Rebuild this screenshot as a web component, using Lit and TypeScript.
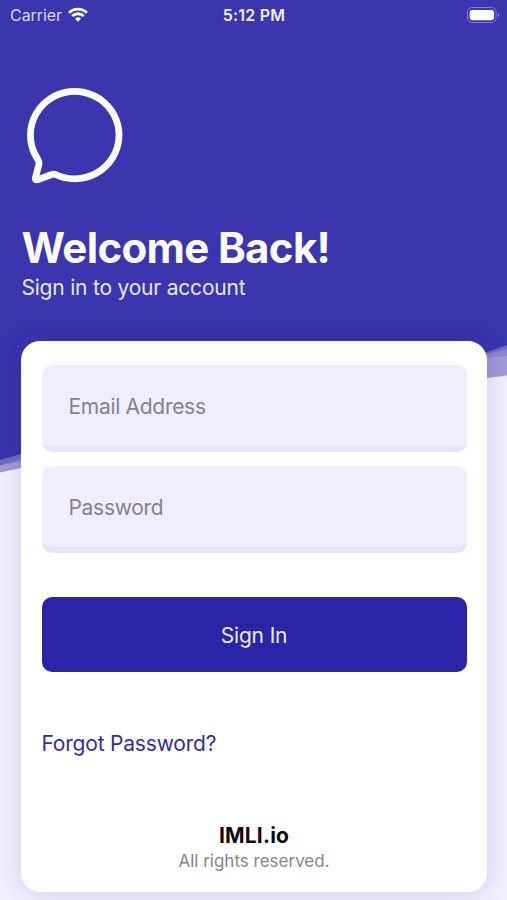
import { LitElement, html, css } from "lit";
import { customElement, property } from "lit/decorators.js";

@customElement("status-bar")
class StatusBar extends LitElement {
  static styles = css`
    :host {
      display: grid;
      grid-template-columns: 1fr auto 1fr;
      align-items: center;
      height: 30px;
      padding: 0 7px 0 10px;
      color: #f0edff;
      font-size: 16px;
      line-height: 30px;
    }
    .carrier { display: flex; align-items: center; gap: 6px; color: #d9d6f8; letter-spacing: -0.05px; }
    .time { padding-right: 2px; font-weight: 600; letter-spacing: 0.2px; }
    .battery { justify-self: end; }
    svg { display: block; margin-top: -1px; }
  `;
  render() {
    return html`
      <div class="carrier">
        <span>Carrier</span>
        <svg width="20" height="15.2" viewBox="0 0 21 16" fill="none" stroke="#fff" stroke-width="3">
          <path d="M1.2 6.1a13.2 13.2 0 0 1 18.6 0" />
          <path d="M4.5 9.6a8.5 8.5 0 0 1 12 0" />
          <path d="M10.5 15.6l-3.1-3.2a4.4 4.4 0 0 1 6.2 0z" fill="#fff" stroke="none" />
        </svg>
      </div>
      <div class="time">5:12 PM</div>
      <svg class="battery" width="34" height="18" viewBox="0 0 34 18">
        <rect x="1.5" y="1.5" width="28.5" height="15" rx="4.5" fill="none" stroke="#8580d0" />
        <rect x="3.7" y="4" width="24.3" height="10.2" rx="2.4" fill="#fff" />
        <path d="M31.8 7v4.2q1.5-.6 1.5-2.1t-1.5-2.1z" fill="#8580d0" />
      </svg>
    `;
  }
}

@customElement("text-field")
class TextField extends LitElement {
  @property() label = "";
  static styles = css`
    :host {
      display: flex;
      align-items: center;
      box-sizing: border-box;
      height: 87px;
      padding: 1px 27px 0;
      border-bottom: 6px solid #e7e4f6;
      border-radius: 10px;
      background: #f0edff;
      color: #85828f;
      font-size: 21px;
      letter-spacing: -0.3px;
    }
  `;
  render() {
    return html`<span>${this.label}</span>`;
  }
}

@customElement("app-root")
class AppRoot extends LitElement {
  static styles = css`
    :host {
      display: block;
      position: relative;
      height: 900px;
      overflow: hidden;
      background: #f2f0ff;
      font-family: Inter, "Liberation Sans", sans-serif;
    }
    .waves { position: absolute; inset: 0; display: block; }
    .content { position: relative; display: flex; flex-direction: column; height: 900px; }
    .logo { display: block; margin: 46px 0 0 10px; }
    h1 {
      margin: 27px 0 0 21.5px;
      color: #fbfaff;
      font-size: 42px;
      font-weight: 700;
      line-height: 50px;
      letter-spacing: -0.65px;
    }
    .subtitle {
      margin: 2px 0 0 21.4px;
      color: #e9e6ff;
      font-size: 21px;
      line-height: 26px;
      letter-spacing: -0.2px;
    }
    .card {
      display: flex;
      flex-direction: column;
      box-sizing: border-box;
      height: 551px;
      margin: 40px 20px 0 21px;
      padding: 24px 20.5px 0;
      border-radius: 19px;
      background: #fff;
      box-shadow: 0 0 26px rgba(30, 20, 90, 0.17);
    }
    .fields { display: grid; gap: 14px; }
    button {
      height: 75px;
      margin: 44px 0 0;
      padding: 2px 0 0;
      border: 0;
      border-radius: 10px;
      background: #2a25a8;
      color: #eeebff;
      font: 21px Inter, "Liberation Sans", sans-serif;
      letter-spacing: -0.15px;
    }
    .forgot {
      align-self: start;
      margin-top: 59px;
      color: #352aa6;
      font-size: 21px;
      line-height: 26px;
      letter-spacing: -0.2px;
    }
    footer { margin-top: 66px; text-align: center; }
    .brand { color: #0c0b10; font-size: 21px; font-weight: 700; line-height: 26px; letter-spacing: 0.2px; }
    .rights { color: #87868b; font-size: 17px; line-height: 24px; }
  `;
  render() {
    return html`
      <svg class="waves" width="507" height="900" viewBox="0 0 507 900">
        <path d="M0 0H507V375.5L487 378Q440 384 370 412T190 428T21 468L0 472.5Z" fill="#a19bd8" />
        <path d="M0 0H507V356L487 358Q440 364 370 392T190 420T21 461.5L0 465.5Z" fill="#8d87ce" />
        <path d="M0 0H507V349L487 354Q440 364 370 388T190 416T21 459L0 465.5Z" fill="#716bc3" />
        <path d="M0 0H507V345L487 352Q440 364 370 382T190 405T21 454L0 460Z" fill="#3b35ae" />
      </svg>
      <div class="content">
        <status-bar></status-bar>
        <svg class="logo" width="130" height="120" viewBox="0 0 130 120">
          <path
            d="M27.6 83A44.3 43.7 0 1 1 45.5 98.5Q43.5 97.8 41 98.7L28 103.6Q24.6 104.6 25.5 101.5L28.9 88.5Q29.5 86 27.6 83Z"
            fill="none" stroke="#fcfbff" stroke-width="6.8" stroke-linejoin="round" />
        </svg>
        <h1>Welcome Back!</h1>
        <div class="subtitle">Sign in to your account</div>
        <main class="card">
          <div class="fields">
            <text-field label="Email Address"></text-field>
            <text-field label="Password"></text-field>
          </div>
          <button>Sign In</button>
          <a class="forgot">Forgot Password?</a>
          <footer>
            <div class="brand">IMLI.io</div>
            <div class="rights">All rights reserved.</div>
          </footer>
        </main>
      </div>
    `;
  }
}
